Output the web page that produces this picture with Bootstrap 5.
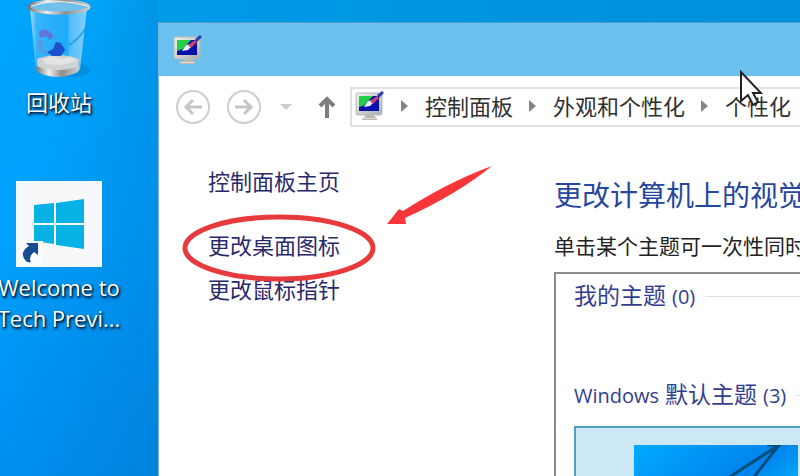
<!DOCTYPE html>
<html lang="zh-CN">
<head>
<meta charset="utf-8">
<meta name="viewport" content="width=device-width, initial-scale=1">
<title>个性化</title>
<link rel="stylesheet" href="https://cdn.jsdelivr.net/npm/bootstrap@5.3.0/dist/css/bootstrap.min.css">
<style>
body{font-family:"Open Sans","Noto Sans CJK SC",sans-serif;font-size:22px;line-height:32px;color:#222}
.desktop{background:linear-gradient(90deg,#00a5fc 0,#00a2f6 100px,#009be8 170px,#0096e2 400px,#008fdc 100%)}
.desk-icons{width:158px;background:linear-gradient(110deg,rgba(0,150,255,0) 30%,rgba(0,124,212,.75) 100%),linear-gradient(180deg,rgba(0,160,252,0) 0,#00a0fc 50%,#0095f8 100%)}
.desk-item{width:118px;color:#fff;text-shadow:1px 2px 3px #001d3a,1px 1px 2px #00172e}
.desk-item:hover{color:#fff}
.desk-item .cjk{font-size:22px;line-height:32px}
.desk-item .latin{font-size:22px;line-height:31px}
.bin-art{margin-bottom:6px}
.tile-art{margin-top:63px;margin-bottom:5px}
.win{margin-top:22px;border-left:1px solid #79b5dc;border-top:1px solid #4b9dcb;min-width:0}
.titlebar{height:53px;background:#6ac1ef;padding-left:13px}
.toolbar{height:62px;padding-left:17px}
.tool{width:34px;height:34px;background:none}
.tool-next{margin-left:17px}
.tool-menu{width:16px;margin-left:18px}
.tool-up{width:22px;margin-left:21px}
.address{height:40px;margin-left:12px;border:2px solid #e1e1e1;border-right:0;padding:0 0 2px 3px;min-width:0}
.address a{color:#303030;white-space:nowrap}
.sep{width:8px;height:12px;margin:0 16px}
.side{width:395px;padding:27px 0 0 49px}
.side a{color:#29296b;width:max-content}
.link-main{margin-bottom:32px}
.link-icons{margin-bottom:12px}
.ring{left:-27px;top:-16px}
.arrow{left:177px;top:-64px}
.content{min-width:0;padding-top:37px}
.content h1{font-size:28px;line-height:40px;color:#2746a0;margin-bottom:15px}
.intro{font-size:21px;line-height:32px;margin-bottom:10px}
.themes{border:2px solid #8b8b8b;border-right:0;border-bottom:0;padding:5px 0 0 18px}
.themes h2{font-size:23px;line-height:32px;color:#343e8f}
.themes h2 .latin{font-size:20px}
.group-line{height:1px;background:#dedede;margin-left:10px}
.group-mine{margin-bottom:65px}
.group-default{margin-bottom:14px}
.theme{border:2px solid #4da1c6;border-right:0;background:#cbe8f4;padding:17px 0 0 58px;border-radius:0}
.cursor{right:37px;top:70px}
</style>
<script src="https://cdn.jsdelivr.net/npm/bootstrap@5.3.0/dist/js/bootstrap.bundle.min.js"></script>
</head>
<body>
<svg width="0" height="0" class="position-absolute" aria-hidden="true">
<defs>
<linearGradient id="frame" x2="1" y2="1"><stop stop-color="#f1f2e8"/><stop offset="1" stop-color="#aaaeb1"/></linearGradient>
<symbol id="monitor" viewBox="0 0 30 30">
<path d="M10 23h9l1 3 2 1v2H7v-2l3-1z" fill="#bbb9ae"/><path d="M7 27h15v1H7z" fill="#deddd3"/>
<rect x="1" y="2" width="26" height="22" rx="2" fill="url(#frame)" stroke="#b4babd"/>
<path d="M4 5h20v15H4z" fill="#0711a8"/><path d="M4 5h14l-5 5-3 4-6 2z" fill="#25cf45"/>
<path d="M9 16l4-6 4-1 2 2-4 4z" fill="#eef4ff"/><path d="M15 10l7-5 2 2-6 6z" fill="#c44566"/><path d="M22 4l5-4 2 2-5 5z" fill="#313cbe"/>
</symbol>
</defs>
</svg>
<main class="desktop d-flex vh-100 overflow-hidden position-relative">
<nav class="desk-icons flex-shrink-0" aria-label="桌面">
<a href="#" class="desk-item d-flex flex-column align-items-center text-decoration-none">
<svg class="bin-art" width="66" height="80" viewBox="0 0 66 80" aria-hidden="true">
<defs><linearGradient id="glass"><stop stop-color="#d6efff" stop-opacity=".85"/><stop offset=".12" stop-color="#6cc4fa" stop-opacity=".5"/><stop offset=".65" stop-color="#4bb9fa" stop-opacity=".4"/><stop offset=".7" stop-color="#8ad0fb" stop-opacity=".6"/><stop offset="1" stop-color="#b5e2ff" stop-opacity=".75"/></linearGradient>
<linearGradient id="metal"><stop stop-color="#777"/><stop offset=".3" stop-color="#eee"/><stop offset=".6" stop-color="#8e8e8e"/><stop offset="1" stop-color="#d0d0d0"/></linearGradient></defs>
<ellipse cx="46" cy="70" rx="18" ry="7" fill="#046faf" opacity=".35"/>
<path d="M4 8l6 62q22 10 44 0l7-62z" fill="url(#glass)"/>
<path d="M11 59q21-8 42 0l-1 12q-20 8-40 0z" fill="#cfd3d6"/>
<path d="M17 59l10-3 9 3 9-2 5 4-13 4-18-1z" fill="#e6e4e3"/>
<path d="M10 66q22 8 43 0l-1 6q-20 10-41 0z" fill="url(#metal)"/>
<path d="M13 32q4-4 9-2l6 6-4 4-4-4-6 2z" fill="#686bd3" opacity=".85"/><path d="M12 40l4 0 1 8 4 5-3 1-6-6z" fill="#579ae6"/><path d="M21 52l6-3 3-7 5 1 4 7-4 6-9 0z" fill="#1b50cc"/>
<path d="M43 45q9-5 16-16" fill="none" stroke="#078edd" stroke-width="2" opacity=".6"/>
<ellipse cx="33" cy="7" rx="30" ry="6" fill="#6fc1ec" stroke="url(#metal)" stroke-width="3"/><path d="M5 6q28-9 56 0" fill="none" stroke="#f2f2f2"/>
</svg>
<span class="cjk">回收站</span></a>
<a href="#" class="desk-item d-flex flex-column align-items-center text-decoration-none">
<svg class="tile-art" width="86" height="86" viewBox="0 0 86 86" aria-hidden="true">
<path d="M0 0h86v86H0z" fill="#f7f8f9"/><path d="M18 24l20-2v20H18zM40 22l28-4v24H40zM18 44h20v19l-20-3zM40 44h28v24l-28-4z" fill="#06b1e5"/>
<path d="M4 60h23v26H4z" fill="#f8fcff"/><path d="M10 62h12v12l-4-3q-6 5-3 10-3 1-5-1-4-4-3-8 1-4 6-7z" fill="#174c93"/>
</svg>
<span class="latin text-center text-nowrap">Welcome to<br>Tech Previ...</span></a>
</nav>
<section class="win flex-grow-1 bg-white d-flex flex-column">
<header class="titlebar flex-shrink-0 d-flex align-items-center"><svg width="32" height="30" aria-hidden="true"><use href="#monitor"/></svg></header>
<div class="toolbar flex-shrink-0 d-flex align-items-center">
<button class="tool border-0 p-0 d-flex" aria-label="后退"><svg width="34" height="34" viewBox="0 0 34 34" fill="none"><circle cx="17" cy="17" r="16" stroke="#cecece" stroke-width="2"/><path d="M26 17H10m7-7l-7 7 7 7" stroke="#c5c5c5" stroke-width="3"/></svg></button>
<button class="tool tool-next border-0 p-0 d-flex" aria-label="前进"><svg width="34" height="34" viewBox="0 0 34 34" fill="none"><circle cx="17" cy="17" r="16" stroke="#cecece" stroke-width="2"/><path d="M8 17h16m-7-7l7 7-7 7" stroke="#c5c5c5" stroke-width="3"/></svg></button>
<button class="tool tool-menu border-0 p-0 d-flex align-items-center" aria-label="最近位置"><svg width="14" height="8"><path d="M1 1h12L7 7z" fill="#ccc"/></svg></button>
<button class="tool tool-up border-0 p-0 d-flex align-items-center justify-content-center" aria-label="向上"><svg width="18" height="24" viewBox="0 0 18 24" fill="none" stroke="#7d7d7d" stroke-width="4"><path d="M9 23V4M2 11l7-7 7 7"/></svg></button>
<nav class="address flex-grow-1 d-flex align-items-center overflow-hidden" aria-label="地址">
<svg class="flex-shrink-0" width="30" height="30" aria-hidden="true"><use href="#monitor"/></svg>
<svg class="sep flex-shrink-0" viewBox="0 0 8 12"><path d="M0 0l7 6-7 6z" fill="#858585"/></svg>
<a href="#" class="text-decoration-none">控制面板</a>
<svg class="sep flex-shrink-0" viewBox="0 0 8 12"><path d="M0 0l7 6-7 6z" fill="#858585"/></svg>
<a href="#" class="text-decoration-none">外观和个性化</a>
<svg class="sep flex-shrink-0" viewBox="0 0 8 12"><path d="M0 0l7 6-7 6z" fill="#858585"/></svg>
<a href="#" class="text-decoration-none">个性化</a>
</nav>
</div>
<div class="d-flex flex-grow-1 overflow-hidden">
<nav class="side flex-shrink-0 d-flex flex-column" aria-label="任务">
<a href="#" class="link-main text-decoration-none">控制面板主页</a>
<div class="link-icons position-relative"><a href="#" class="text-decoration-none">更改桌面图标</a>
<svg class="ring position-absolute" width="196" height="70" viewBox="0 0 196 70" fill="none" aria-hidden="true"><ellipse cx="98" cy="35" rx="94" ry="31" stroke="#e83a3c" stroke-width="5"/></svg>
<svg class="arrow position-absolute" width="110" height="62" viewBox="0 0 110 62" aria-hidden="true"><path d="M2 59l12-15 4 2Q65 16 107 1 71 30 20 53l1 6z" fill="#f8363a"/></svg></div>
<a href="#" class="text-decoration-none">更改鼠标指针</a>
</nav>
<section class="content flex-grow-1 d-flex flex-column overflow-hidden">
<h1 class="fw-normal text-nowrap">更改计算机上的视觉</h1>
<p class="intro text-nowrap">单击某个主题可一次性同时</p>
<div class="themes flex-grow-1">
<div class="group-mine d-flex align-items-center"><h2 class="fw-normal text-nowrap m-0">我的主题 <span class="latin">(0)</span></h2><div class="group-line flex-grow-1"></div></div>
<div class="group-default d-flex align-items-center"><h2 class="fw-normal text-nowrap m-0"><span class="latin">Windows</span> 默认主题 <span class="latin">(3)</span></h2><div class="group-line flex-grow-1"></div></div>
<button class="theme d-block w-100 text-start" aria-label="Windows 主题">
<svg class="d-block" width="164" height="102" viewBox="0 0 164 102"><defs><linearGradient id="sky" x2="1" y2=".8"><stop stop-color="#00aaff"/><stop offset=".55" stop-color="#0083ed"/><stop offset=".75" stop-color="#00a4fa"/><stop offset="1" stop-color="#0095f0"/></linearGradient></defs><path d="M0 0h164v102H0z" fill="url(#sky)"/><path d="M145 0L60 55M145 0l-55 70M133 0h14" fill="none" stroke="#064c79" stroke-width="3"/></svg>
</button>
</div>
</section>
</div>
</section>
<svg class="cursor position-absolute" width="24" height="36" viewBox="0 0 24 36" aria-hidden="true"><path d="M2 2v29l7-6 5 10 5-3-5-9h8z" fill="#fff" fill-opacity=".85" stroke="#222" stroke-width="2"/></svg>
</main>
</body>
</html>
